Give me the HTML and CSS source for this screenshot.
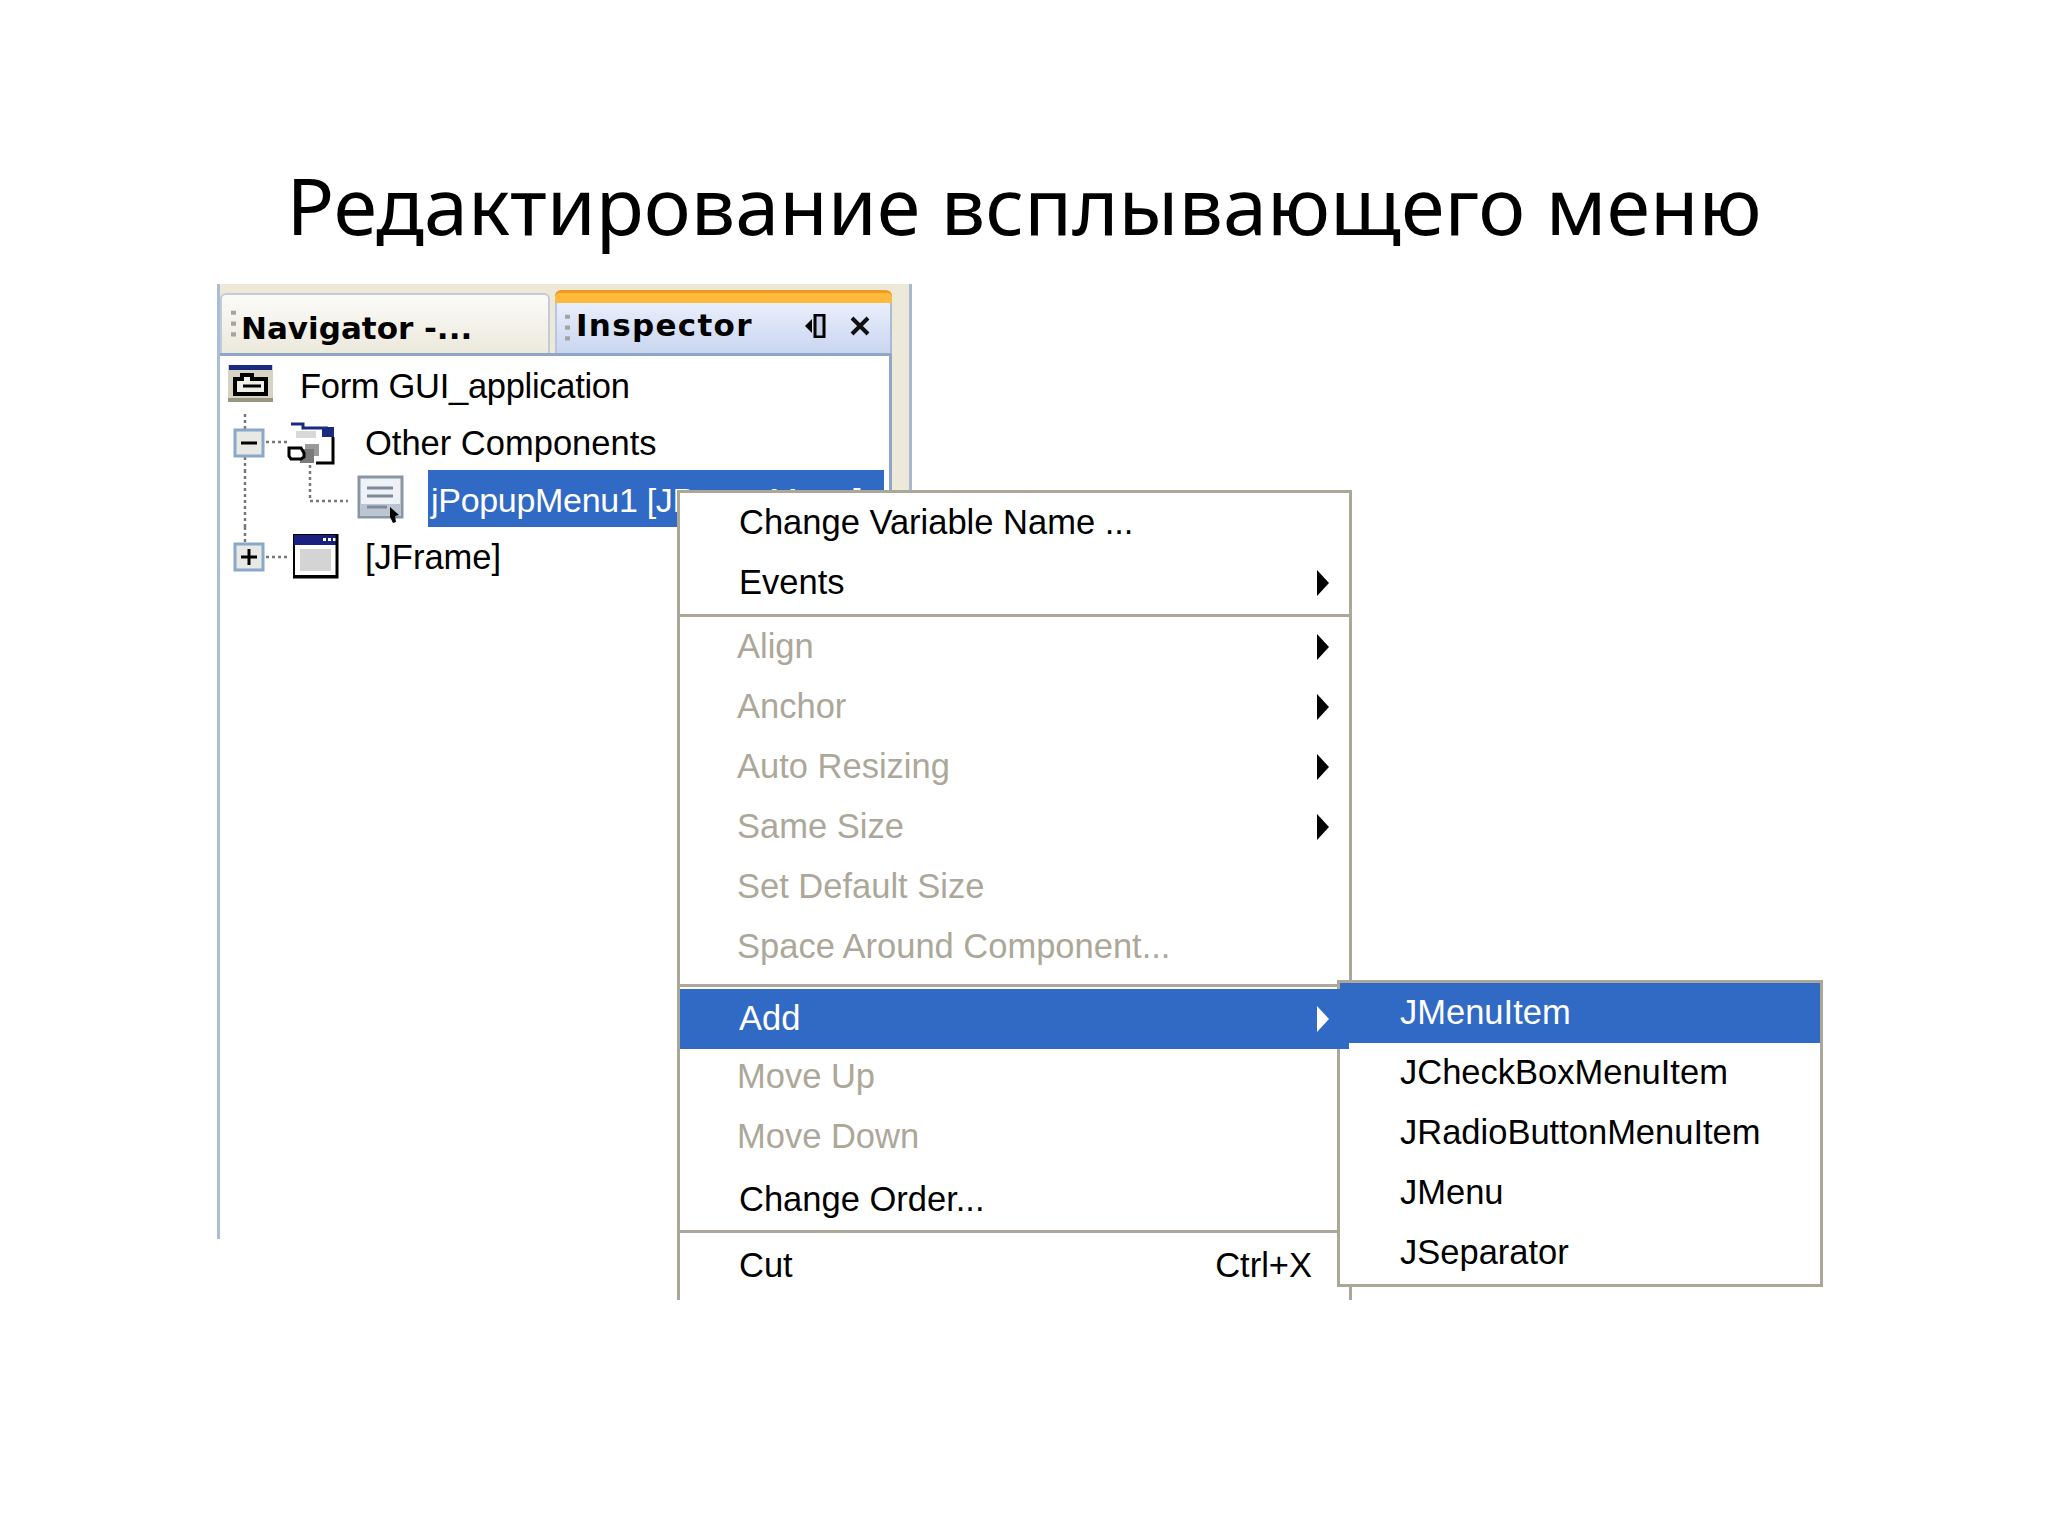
FILE: index.html
```html
<!DOCTYPE html>
<html lang="en">
<head>
    <meta charset="UTF-8">
    <title>Редактирование всплывающего меню</title>
    <link rel="stylesheet" href="styles.css">
</head>
<body>
    <h1 class="title">Редактирование всплывающего меню</h1>
    <div class="stage">
        <div class="panel">
            <div class="tabs">
                <div class="tab tab-idle">
                    <svg class="grip" viewBox="0 0 6 32"><path d="M0 0h6v5H0zM0 13h6v5H0zM0 26h6v5H0z" fill="#a5a5a0"/></svg>
                    <span class="tab-label">Navigator -...</span>
                </div>
                <div class="tab tab-active">
                    <svg class="grip" viewBox="0 0 6 32"><path d="M0 0h6v5H0zM0 13h6v5H0zM0 26h6v5H0z" fill="#a5a5a0"/></svg>
                    <span class="tab-label">Inspector</span>
                    <svg class="tab-pin" viewBox="0 0 21 24"><path d="M0 12l7-7v14z" fill="#000"/><path d="M10 1h9v22h-9z" fill="#c6d0e8" stroke="#000" stroke-width="3"/></svg>
                    <svg class="tab-close" viewBox="0 0 20 20"><path d="M2 2l16 16M18 2L2 18" stroke="#111" stroke-width="4"/></svg>
                </div>
            </div>
            <div class="tree">
                <div class="tree-row">
                    <svg class="tree-icons w80" viewBox="0 0 80 57">
                        <rect x="8" y="9" width="45" height="37" fill="#d6d3c4"/>
                        <rect x="9" y="9" width="43" height="5" fill="#1a2a80"/>
                        <rect x="8" y="42" width="45" height="4" fill="#99967f"/>
                        <path d="M15 23h7v-4h10v4h14v15H15z" fill="#efefe8" stroke="#000" stroke-width="4"/>
                        <path d="M23 30h18" stroke="#000" stroke-width="3"/>
                    </svg>
                    <span class="tree-text form-name">Form GUI_application</span>
                </div>
                <div class="tree-row">
                    <svg class="tree-icons w145" viewBox="0 0 145 57">
                        <path d="M25 1v15M25 44v13M46 29h23M90 52v5" class="dots"/>
                        <rect x="15" y="17" width="28" height="26" class="exp"/>
                        <path d="M21 30h16" stroke="#000" stroke-width="3"/>
                        <path d="M71 11h14l5 3h18l4 3v30h-5l-14 2H71z" fill="#fff"/>
                        <path d="M71 11h12v4h25" stroke="#1a2a80" stroke-width="3" fill="none"/>
                        <rect x="102" y="14" width="12" height="10" fill="#1a2a80"/>
                        <path d="M113 24v26H96" stroke="#000" stroke-width="3" fill="none"/>
                        <rect x="76" y="18" width="20" height="7" fill="#d8d8d8"/>
                        <rect x="85" y="31" width="14" height="12" fill="#9a9a9a"/>
                        <rect x="80" y="36" width="14" height="14" fill="#7a7a7a"/>
                        <path d="M69 35h12l3 5v4l-3 2H71l-2-3z" fill="#fff" stroke="#000" stroke-width="3"/>
                    </svg>
                    <span class="tree-text">Other Components</span>
                </div>
                <div class="tree-row">
                    <svg class="tree-icons w208" viewBox="0 0 208 57">
                        <path d="M25 0v57M90 1v30h38" class="dots"/>
                        <rect x="139" y="7" width="43" height="40" fill="#eef1f6" stroke="#8a95a3" stroke-width="3"/>
                        <rect x="140" y="34" width="41" height="12" fill="#bcc6d3"/>
                        <path d="M147 18h26M147 26h26M147 37h20" stroke="#7f8a98" stroke-width="3"/>
                        <path d="M170 37l9 8-4 1 1 6-3 1-3-6z" fill="#000"/>
                    </svg>
                    <span class="tree-text selected">jPopupMenu1 [JPopupMenu]</span>
                </div>
                <div class="tree-row">
                    <svg class="tree-icons w145" viewBox="0 0 145 57">
                        <path d="M25 0v16M46 30h23" class="dots"/>
                        <rect x="15" y="17" width="28" height="26" class="exp"/>
                        <path d="M21 30h16M29 22v16" stroke="#000" stroke-width="3"/>
                        <rect x="74" y="8" width="43" height="41" fill="#fff" stroke="#000" stroke-width="2"/>
                        <rect x="74" y="8" width="43" height="10" fill="#1a2080"/>
                        <path d="M103 11h3v3h-3zM108 11h3v3h-3zM113 11h3v3h-3z" fill="#fff"/>
                        <rect x="80" y="22" width="31" height="22" fill="#d4d4d4"/>
                        <path d="M117 7v43H73" stroke="#000" stroke-width="3" fill="none"/>
                    </svg>
                    <span class="tree-text">[JFrame]</span>
                </div>
            </div>
        </div>

        <div class="popup">
            <div class="item">Change Variable Name ...</div>
            <div class="item has-sub">Events</div>
            <div class="sep sep-first"></div>
            <div class="item off has-sub">Align</div>
            <div class="item off has-sub">Anchor</div>
            <div class="item off has-sub">Auto Resizing</div>
            <div class="item off has-sub">Same Size</div>
            <div class="item off">Set Default Size</div>
            <div class="item off">Space Around Component...</div>
            <div class="sep sep-add"></div>
            <div class="item has-sub current">Add</div>
            <div class="item off move-up">Move Up</div>
            <div class="item off">Move Down</div>
            <div class="item change-order">Change Order...</div>
            <div class="sep"></div>
            <div class="item cut">Cut<span class="shortcut">Ctrl+X</span></div>

            <div class="submenu">
                <div class="item current">JMenuItem</div>
                <div class="item">JCheckBoxMenuItem</div>
                <div class="item">JRadioButtonMenuItem</div>
                <div class="item">JMenu</div>
                <div class="item">JSeparator</div>
            </div>
        </div>
    </div>
</body>
</html>
```

FILE: styles.css
```css
body {
    margin: 0;
    min-height: 1535px;
    background-color: #fff;
    font-family: "Liberation Sans", Arial, sans-serif;
}

.title {
    margin: 0;
    padding-top: 155px;
    height: 129px;
    box-sizing: content-box;
    line-height: 100px;
    font-family: "Noto Sans", Tahoma, sans-serif;
    font-size: 79px;
    font-weight: normal;
    text-align: center;
    color: #000;
    white-space: nowrap;
}

.stage {
    position: relative;
    margin-left: 217px;
    width: 695px;
    height: 955px;
}

/* dockable window */
.panel {
    display: flex;
    flex-direction: column;
    box-sizing: border-box;
    height: 100%;
    padding: 9px 17px 0 0;
    background-color: #ece9d8;
    border-left: 3px solid #a9bcd8;
    border-right: 3px solid #a9b8cf;
}

.tabs {
    display: flex;
    gap: 5px;
    height: 60px;
}

.tab {
    display: flex;
    align-items: center;
    box-sizing: border-box;
    border-radius: 6px 6px 0 0;
}

.tab-idle {
    width: 330px;
    padding-left: 9px;
    background: linear-gradient(#fbfbf8, #ece9dc);
    border: 2px solid #c3cbd6;
    border-bottom: none;
}

.tab-active {
    flex: 1;
    padding-left: 10px;
    background: linear-gradient(#e9eefb, #c9d6f0);
    border-top: 10px solid #fdb93c;
    box-shadow: inset 2px 0 #b7c6e2, inset -2px 0 #a9b9d8, 0 -3px #f09a20;
}

.grip {
    width: 5px;
    height: 30px;
    flex-shrink: 0;
}

.tab-label {
    margin-left: 5px;
    margin-top: 7px;
    font-family: "DejaVu Sans", Verdana, sans-serif;
    font-size: 31px;
    font-weight: bold;
    color: #000;
    white-space: nowrap;
}

.tab-active .tab-label {
    margin-left: 6px;
    margin-top: -6px;
    letter-spacing: 1.3px;
}

.tab-pin {
    width: 21px;
    height: 24px;
    margin-left: 52px;
    margin-top: -4px;
}

.tab-close {
    width: 20px;
    height: 20px;
    margin-left: 24px;
    margin-top: -4px;
}

.tree {
    flex: 1;
    background-color: #fff;
    border-top: 3px solid #8fa6c8;
    border-right: 3px solid #8fa6c8;
}

.tree-row {
    display: flex;
    align-items: center;
    height: 57px;
}

.tree-icons {
    flex-shrink: 0;
    height: 57px;
}

.w80 { width: 80px; }
.w145 { width: 145px; }
.w208 { width: 208px; }

.dots {
    fill: none;
    stroke: #777;
    stroke-width: 2.5;
    stroke-dasharray: 3 3;
}

.exp {
    fill: #e8e8e4;
    stroke: #8aa8c8;
    stroke-width: 3;
}

.tree-text {
    padding-top: 4px;
    font-size: 34.5px;
    color: #000;
    white-space: nowrap;
}

.form-name {
    letter-spacing: -0.3px;
}

.selected {
    box-sizing: border-box;
    width: 456px;
    height: 57px;
    padding: 0 0 0 3px;
    line-height: 60px;
    font-size: 34px;
    letter-spacing: -0.3px;
    overflow: hidden;
    background-color: #316ac5;
    color: #fff;
}

/* popup menu */
.popup {
    position: absolute;
    left: 460px;
    top: 206px;
    box-sizing: border-box;
    width: 675px;
    height: 810px;
    background-color: #fff;
    border: 3px solid #aca899;
    border-bottom: none;
}

.item {
    position: relative;
    height: 60px;
    padding-left: 59px;
    line-height: 58px;
    font-size: 34.5px;
    color: #000;
    white-space: nowrap;
}

.off {
    padding-left: 57px;
    color: #aca899;
}

.has-sub::after {
    content: "";
    position: absolute;
    right: 20px;
    top: 17px;
    border-left: 12px solid #000;
    border-top: 13px solid transparent;
    border-bottom: 13px solid transparent;
}

.current {
    background-color: #316ac5;
    color: #fff;
}

.popup > .current {
    z-index: 2;
}

.current::after {
    border-left-color: #fff;
}

.sep {
    height: 3px;
    background-color: #aca899;
}

.sep-first {
    margin-top: 1px;
}

.sep-add {
    margin-top: 7px;
    margin-bottom: 2px;
}

.move-up {
    margin-top: -2px;
}

.change-order {
    margin-top: 3px;
}

.cut {
    margin-top: 3px;
}

.shortcut {
    position: absolute;
    right: 37px;
}

.submenu {
    position: absolute;
    left: 657px;
    top: 487px;
    box-sizing: border-box;
    width: 486px;
    height: 307px;
    background-color: #fff;
    border: 3px solid #aca899;
}

.submenu .item {
    padding-left: 60px;
}
```
